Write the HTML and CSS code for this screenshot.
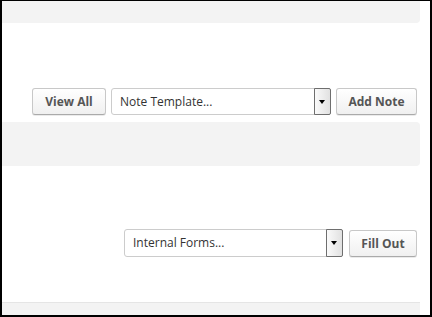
FILE: index.html
```html
<!DOCTYPE html>
<html lang="en">
  <head>
    <title>Notes and Forms</title>
    <link rel="stylesheet" href="styles.css">
  </head>
  <body>
    <div class="frame">
      <div class="panel">
        <div class="band band-top"></div>

        <div class="actions actions-notes">
          <button class="btn btn-view">View All</button>
          <div class="select select-notes">
            <span class="select-text">Note Template...</span>
            <span class="select-arrow"></span>
          </div>
          <button class="btn btn-add">Add Note</button>
        </div>

        <div class="band band-mid"></div>

        <div class="actions actions-forms">
          <div class="select select-forms">
            <span class="select-text">Internal Forms...</span>
            <span class="select-arrow"></span>
          </div>
          <button class="btn btn-fill">Fill Out</button>
        </div>

        <div class="band band-bottom"></div>
      </div>
    </div>
  </body>
</html>
```
FILE: styles.css
```css
body {
  margin: 0;
  background: white;
  font-family: "Open Sans", "Liberation Sans", sans-serif;
}
.frame {
  box-sizing: border-box;
  width: 432px;
  height: 317px;
  border-top: 1px solid black;
  border-left: 2px solid black;
  border-right: 2px solid black;
  border-bottom: 2px solid black;
  overflow: hidden;
}
.panel {
  margin-right: 10px;
}
.band {
  background: rgb(243, 243, 243);
}
.band-top {
  height: 22px;
  border-radius: 0 0 4px 0;
}
.band-mid {
  height: 44px;
  margin-top: 7px;
  border-radius: 0 4px 4px 0;
}
.band-bottom {
  height: 13px;
  margin-top: 45px;
  border-top: 1px solid rgb(229, 229, 229);
}
.actions {
  display: flex;
  justify-content: flex-end;
  padding-right: 3px;
}
.actions-notes {
  margin-top: 65px;
  height: 27px;
  gap: 5px;
}
.actions-forms {
  margin-top: 63px;
  height: 28px;
  gap: 6px;
}
.btn {
  box-sizing: border-box;
  height: 27px;
  padding: 0;
  border: 1px solid rgb(200, 200, 200);
  border-bottom-color: rgb(170, 170, 170);
  border-radius: 3px;
  background: linear-gradient(rgb(255, 255, 255), rgb(240, 240, 240));
  box-shadow: 0 1px 0 rgba(0, 0, 0, 0.08);
  color: rgb(85, 85, 85);
  font-family: "Open Sans", "Liberation Sans", sans-serif;
  font-weight: bold;
  font-size: 12px;
}
.btn-view {
  width: 74px;
}
.btn-add {
  width: 81px;
}
.btn-fill {
  width: 68px;
  margin-top: 1px;
}
.select {
  box-sizing: border-box;
  display: flex;
  align-items: stretch;
  width: 220px;
  height: 27px;
  border: 1px solid rgb(204, 204, 204);
  border-radius: 3px;
  background: white;
}
.select-forms {
  width: 219px;
  height: 28px;
}
.select-text {
  flex: 1;
  padding-left: 8px;
  line-height: 25px;
  font-size: 12px;
  color: rgb(51, 51, 51);
}
.select-forms .select-text {
  line-height: 26px;
}
.select-arrow {
  position: relative;
  box-sizing: border-box;
  width: 17px;
  margin: -1px -1px -1px 0;
  border: 1px solid rgb(110, 110, 110);
  border-radius: 0 2px 2px 0;
  background: linear-gradient(to right, rgb(250, 250, 250), rgb(225, 225, 225));
}
.select-arrow::after {
  content: "";
  position: absolute;
  left: 4px;
  top: 50%;
  margin-top: -2px;
  border-left: 3.5px solid transparent;
  border-right: 3.5px solid transparent;
  border-top: 4px solid black;
}
```
